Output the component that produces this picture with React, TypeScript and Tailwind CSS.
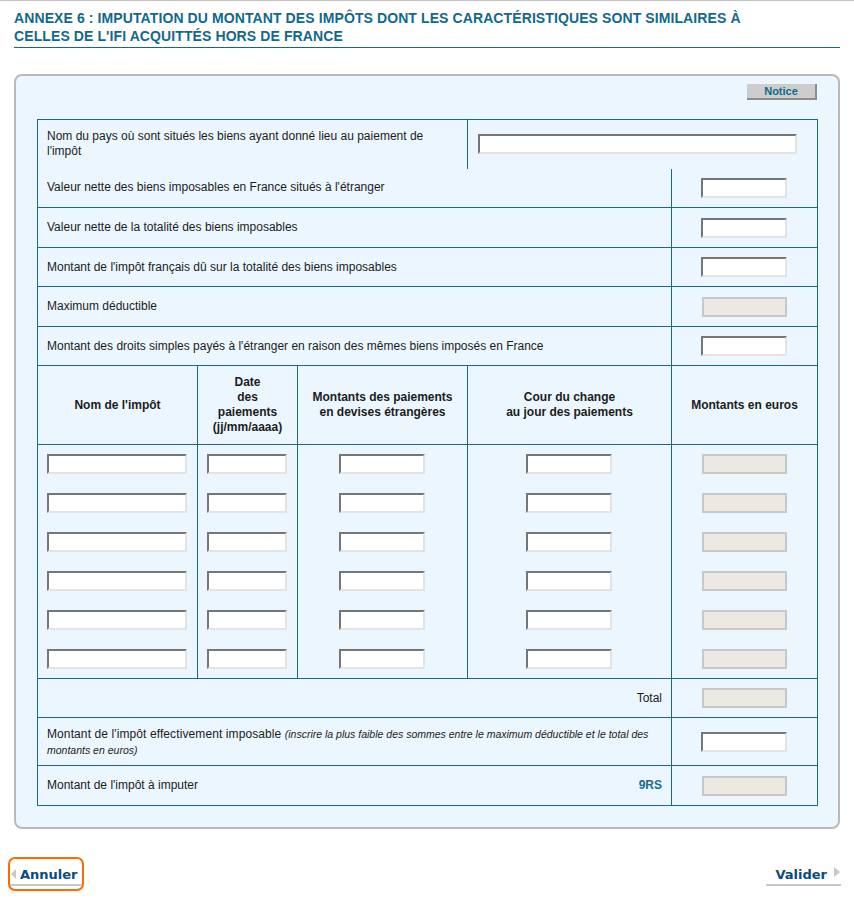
const font = { fontFamily: '"Liberation Sans", Arial, sans-serif' };
const narrow = { fontFamily: '"Liberation Sans Narrow", "Arial Narrow", "Liberation Sans", sans-serif' };
const verdana = { fontFamily: '"DejaVu Sans", Verdana, sans-serif' };

const Field = ({ w = "w-[86px]" }: { w?: string }) => (
  <input
    type="text"
    className={`${w} h-[20px] bg-white border-2 border-t-[#767676] border-l-[#767676] border-b-[#e3e3e3] border-r-[#e3e3e3] outline-none text-[12px] px-1 align-middle`}
  />
);

const Locked = () => (
  <input
    type="text"
    disabled
    className="w-[85px] h-[20px] bg-[#ebe9e2] border-2 border-[#c8c8c8] align-middle"
  />
);

const simpleRows = [
  { label: "Valeur nette des biens imposables en France situés à l'étranger", locked: false, h: "h-[39px]" },
  { label: "Valeur nette de la totalité des biens imposables", locked: false, h: "h-[40px]" },
  { label: "Montant de l'impôt français dû sur la totalité des biens imposables", locked: false, h: "h-[39px]" },
  { label: "Maximum déductible", locked: true, h: "h-[40px]" },
  { label: "Montant des droits simples payés à l'étranger en raison des mêmes biens imposés en France", locked: false, h: "h-[39px]" },
];

const cell = "border border-[#1a6a85]";

export default function App() {
  return (
    <div className="min-h-[900px] bg-white border-t border-[#c4c4c4] text-[#1c1c1c]" style={font}>
      <div className="mx-[14px] pt-[8px] pb-[2px] border-b border-[#11698a]">
        <h1 className="text-[14px] leading-[18px] font-bold text-[#11698a] uppercase tracking-[0.1px]" style={narrow}>
          Annexe 6 : imputation du montant des impôts dont les caractéristiques sont similaires à
          <br />
          celles de l'IFI acquittés hors de France
        </h1>
      </div>

      <div className="mx-[14px] mt-[26px] border-2 border-[#b9b9b9] rounded-[8px] bg-[#ecf6fe] px-[21px] pt-[8px] pb-[21px]">
        <div className="flex justify-end mb-[19px]">
          <button
            className="w-[70px] h-[16px] bg-[#cdcdcd] border-r-2 border-b-2 border-[#8d8d8d] text-[11px] leading-[14px] font-bold text-[#11698a]"
            style={narrow}
          >
            Notice
          </button>
        </div>

        <table className="w-[780px] table-fixed border-collapse text-[12px] leading-[15px]">
          <colgroup>
            <col className="w-[160px]" />
            <col className="w-[100px]" />
            <col className="w-[170px]" />
            <col className="w-[204px]" />
            <col className="w-[146px]" />
          </colgroup>
          <tbody>
            <tr className="h-[49px]">
              <td colSpan={3} className="border-l border-t border-r border-[#1a6a85] pl-[9px] pr-[10px] align-middle">
                Nom du pays où sont situés les biens ayant donné lieu au paiement de l'impôt
              </td>
              <td colSpan={2} className="border-t border-r border-[#1a6a85] pl-[10px] align-middle">
                <Field w="w-[319px]" />
              </td>
            </tr>
            {simpleRows.map((r, i) => (
              <tr key={i} className={r.h}>
                <td colSpan={4} className={`${cell} ${i === 0 ? "border-t-0" : ""} pl-[9px] pr-[10px]`}>
                  {r.label}
                </td>
                <td className={`${cell} ${i === 0 ? "border-t-0" : ""} text-center pr-[1px]`}>
                  {r.locked ? <Locked /> : <Field />}
                </td>
              </tr>
            ))}

            <tr className="h-[79px] font-bold text-center">
              <td className={cell}>Nom de l'impôt</td>
              <td className={cell}>
                Date
                <br />
                des
                <br />
                paiements
                <br />
                (jj/mm/aaaa)
              </td>
              <td className={cell}>
                Montants des paiements
                <br />
                en devises étrangères
              </td>
              <td className={cell}>
                Cour du change
                <br />
                au jour des paiements
              </td>
              <td className={cell}>Montants en euros</td>
            </tr>

            {[0, 1, 2, 3, 4, 5].map((i) => (
              <tr key={i} className="h-[39px] text-center">
                <td className="border-l border-r border-[#1a6a85] pr-[1px]">
                  <Field w="w-[140px]" />
                </td>
                <td className="border-l border-r border-[#1a6a85] pr-[1px]">
                  <Field w="w-[80px]" />
                </td>
                <td className="border-l border-r border-[#1a6a85] pr-[1px]">
                  <Field />
                </td>
                <td className="border-l border-r border-[#1a6a85] pr-[1px]">
                  <Field />
                </td>
                <td className="border-l border-r border-[#1a6a85]">
                  <Locked />
                </td>
              </tr>
            ))}

            <tr className="h-[39px]">
              <td colSpan={4} className={`${cell} text-right pr-[9px]`}>
                Total
              </td>
              <td className={`${cell} text-center`}>
                <Locked />
              </td>
            </tr>
            <tr className="h-[48px]">
              <td colSpan={4} className={`${cell} pl-[9px] pr-[12px] leading-[16px]`}>
                <span className="tracking-[0.1px]">Montant de l'impôt effectivement imposable</span>{" "}
                <i className="text-[10.5px]">
                  (inscrire la plus faible des sommes entre le maximum déductible et le total des montants en euros)
                </i>
              </td>
              <td className={`${cell} text-center pr-[1px]`}>
                <Field />
              </td>
            </tr>
            <tr className="h-[40px]">
              <td colSpan={4} className={`${cell} pl-[9px] pr-[9px]`}>
                <div className="flex justify-between">
                  <span>Montant de l'impôt à imputer</span>
                  <span className="font-bold text-[#1b6e8b]">9RS</span>
                </div>
              </td>
              <td className={`${cell} text-center`}>
                <Locked />
              </td>
            </tr>
          </tbody>
        </table>
      </div>

      <div className="flex justify-between items-start mt-[28px] pl-[8px] pr-[13px]" style={verdana}>
        <button className="relative h-[34px] border-2 border-[#ff6a00] rounded-[7px] flex items-center">
          <span className="absolute left-[1px] top-[10px] w-0 h-0 border-y-[5px] border-y-transparent border-r-[5px] border-r-[#c8c8c8]" />
          <span className="mt-[4px] text-[13px] font-bold text-[#0b4a7e] border-b-2 border-[#c8c8c8] leading-[18px] pl-[10px] pr-[4px]">
            Annuler
          </span>
        </button>
        <button className="relative h-[34px] flex items-center">
          <span className="mt-[4px] text-[13px] font-bold text-[#0b4a7e] border-b-2 border-[#c8c8c8] leading-[18px] pl-[9px] pr-[14px]">
            Valider
          </span>
          <span className="absolute right-[1px] top-[10px] w-0 h-0 border-y-[5px] border-y-transparent border-l-[6px] border-l-[#c8c8c8]" />
        </button>
      </div>
    </div>
  );
}
